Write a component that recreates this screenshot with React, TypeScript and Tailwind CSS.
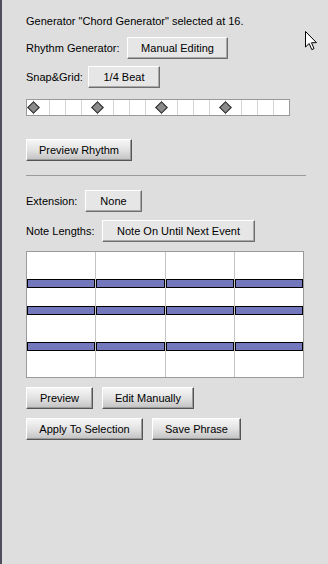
import { ReactNode } from 'react';

const font = { fontFamily: '"Liberation Sans", Arial, sans-serif' };

// flat raised button (combo-like)
const FlatButton = ({ children, w }: { children: ReactNode; w: string }) => (
  <div
    className={`${w} h-[22px] flex items-center justify-center bg-[#e6e6e6] border border-t-white border-l-white border-r-[#6e6e6e] border-b-[#6e6e6e] shadow-[inset_-1px_-1px_0_#a8a8a8] text-[11px] text-black`}
  >
    {children}
  </div>
);

// gradient push button
const PushButton = ({ children, w }: { children: ReactNode; w: string }) => (
  <div
    className={`${w} h-[22px] flex items-center justify-center bg-gradient-to-b from-[#f6f6f6] via-[#e2e2e2] to-[#c2c2c2] border border-t-white border-l-white border-r-[#555] border-b-[#555] shadow-[inset_-1px_-1px_0_#9a9a9a] text-[11px] text-black`}
  >
    {children}
  </div>
);

const Row = ({ label, lw, children, mt }: { label: string; lw: string; children: ReactNode; mt: string }) => (
  <div className={`flex items-center ${mt}`}>
    <div className={`${lw} text-[11px] text-black`}>{label}</div>
    {children}
  </div>
);

const hits = [0, 4, 8, 12];
const notes = [28, 55, 91];

export default function App() {
  return (
    <div className="w-[328px] h-[564px] bg-[#dedede] relative overflow-hidden flex" style={font}>
      <div className="w-[2px] h-full bg-[#4e4e5e]" />
      <div className="flex flex-col pl-[24px] pt-[14px]">
        <div className="h-[14px] leading-[14px] text-[11px] text-black">
          Generator "Chord Generator" selected at 16.
        </div>

        <Row label="Rhythm Generator:" lw="w-[101px]" mt="mt-[9px]">
          <FlatButton w="w-[101px]">Manual Editing</FlatButton>
        </Row>

        <Row label="Snap&Grid:" lw="w-[62px]" mt="mt-[7px]">
          <FlatButton w="w-[72px]">1/4 Beat</FlatButton>
        </Row>

        {/* rhythm strip: steps sit on the grid lines */}
        <div className="mt-[11px] w-[264px] h-[17px] bg-white border border-[#9a9a9a] flex pl-[6px]">
          {Array.from({ length: 16 }).map((_, i) => (
            <div key={i} className="relative w-[16px] border-l border-[#d4d4d4]">
              {hits.includes(i) && (
                <div className="absolute left-[-5px] top-[3px] w-[9px] h-[9px] rotate-45 bg-[#8a8a8a] border border-[#2a2a2a]" />
              )}
            </div>
          ))}
        </div>

        <div className="mt-[23px]">
          <PushButton w="w-[106px]">Preview Rhythm</PushButton>
        </div>

        <div className="mt-[14px] w-[280px] h-px bg-[#9a9a9a]" />

        <Row label="Extension:" lw="w-[59px]" mt="mt-[14px]">
          <FlatButton w="w-[57px]">None</FlatButton>
        </Row>

        <Row label="Note Lengths:" lw="w-[76px]" mt="mt-[8px]">
          <FlatButton w="w-[153px]">Note On Until Next Event</FlatButton>
        </Row>

        {/* piano roll */}
        <div className="mt-[9px] w-[278px] h-[127px] bg-white border border-[#9a9a9a] relative flex">
          {Array.from({ length: 4 }).map((_, c) => (
            <div key={c} className={`relative flex-1 ${c < 3 ? 'border-r border-[#c4c4c4]' : ''}`}>
              {notes.map((t) => (
                <div
                  key={t}
                  className="absolute left-0 right-0 h-[9px] bg-[#7278bb] border border-black"
                  style={{ top: t - 1 }}
                />
              ))}
            </div>
          ))}
        </div>

        <div className="mt-[9px] flex gap-[9px]">
          <PushButton w="w-[67px]">Preview</PushButton>
          <PushButton w="w-[92px]">Edit Manually</PushButton>
        </div>

        <div className="mt-[9px] flex gap-[9px]">
          <PushButton w="w-[117px]">Apply To Selection</PushButton>
          <PushButton w="w-[89px]">Save Phrase</PushButton>
        </div>
      </div>

      {/* mouse cursor */}
      <svg className="absolute left-[305px] top-[31px]" width="13" height="20" viewBox="0 0 13 20">
        <path
          d="M0.5 0.5 L0.5 16 L4.2 12.5 L6.8 18.6 L9 17.6 L6.5 11.7 L11.5 11.7 Z"
          fill="white"
          stroke="black"
          strokeWidth="1"
          strokeLinejoin="miter"
        />
      </svg>
    </div>
  );
}
